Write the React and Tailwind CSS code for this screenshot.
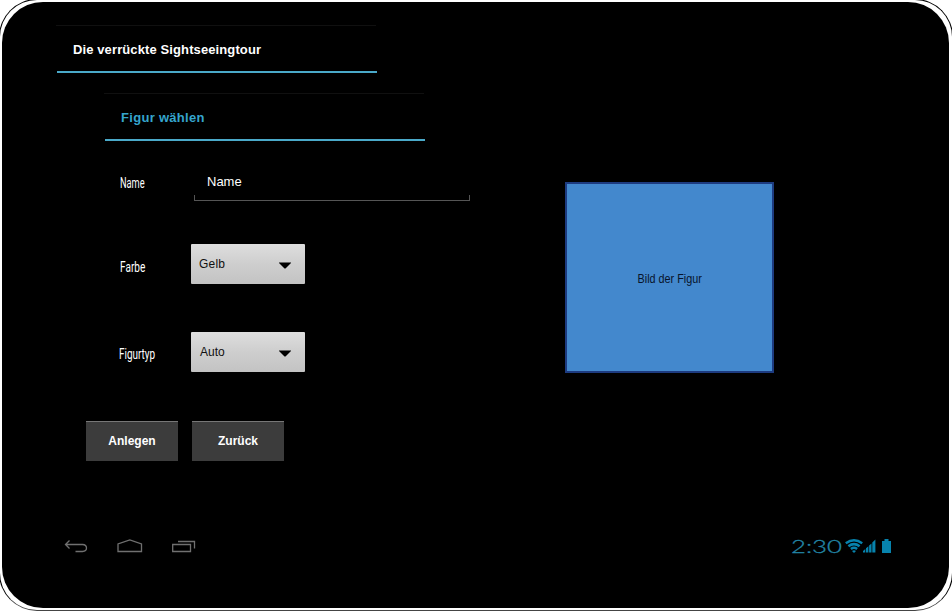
import React from "react";

function Heading({ children, className, textClass }) {
  return (
    <div className={`h-12 w-80 border-b-2 border-[#4aa9c9] ${className}`}>
      <div className="-ml-px h-px w-80 bg-[#101010]" />
      <h2 className={`pl-4 pt-[15px] text-[13px] font-bold leading-[18px] whitespace-nowrap ${textClass}`}>{children}</h2>
    </div>
  );
}

function Label({ children, className }) {
  return (
    <span className={`block w-9 origin-left whitespace-nowrap font-['Roboto',sans-serif] text-[14px] leading-4 text-white ${className}`}>
      {children}
    </span>
  );
}

function Select({ value, textClass }) {
  return (
    <div className="flex h-10 w-[114px] items-center justify-between rounded-[1px] bg-linear-to-b from-[#dedede] via-[#cecece] to-[#c3c3c3] pl-2 pr-[14px] text-[12px] text-[#111]">
      <span className={textClass}>{value}</span>
      <svg width="12" height="7" viewBox="0 0 12 7" className="mt-[3px]">
        <path d="M0 0.5H12V1L6.5 6.5H5.5L0 1Z" fill="#000" />
      </svg>
    </div>
  );
}

function Button({ children }) {
  return (
    <button className="h-10 w-[92px] border-t border-[#777] bg-[#3c3c3c] pb-[2px] text-[12px] font-bold text-white">{children}</button>
  );
}

function NavIcons() {
  return (
    <div className="flex h-4 items-center text-[#707070]">
      <svg width="24" height="14" viewBox="0 0 24 14" fill="none" stroke="currentColor" strokeWidth="1.3">
        <path d="M5.5 1.5L1.5 5.5L5.5 9.5M1.5 5.5H18.5Q22.5 5.7 22.5 9T18.5 12.5H11.5" />
      </svg>
      <svg width="26" height="14" viewBox="0 0 26 14" className="ml-[29px]" fill="none" stroke="currentColor" strokeWidth="1.3">
        <path d="M1 12.5V5L12.8 1L24.5 5V12.5Z" />
      </svg>
      <svg width="24" height="14" viewBox="0 0 24 14" className="ml-[29px]" fill="none" stroke="currentColor" strokeWidth="1.3">
        <path d="M0.7 5.5H18.5V12.5H0.7ZM6 2.5H22.5V9.5" />
      </svg>
    </div>
  );
}

function Status() {
  return (
    <div className="flex h-4 items-center text-[#0783ad]">
      <span className="block w-[54px] origin-left scale-x-[1.43] whitespace-nowrap font-['Lato',sans-serif] text-[18px] font-light leading-4 text-[#2387a8] [-webkit-text-stroke:0.3px_#2387a8]">2:30</span>
      <svg width="18" height="14" viewBox="0 0 18 14" fill="none" stroke="currentColor" strokeWidth="2.5">
        <path d="M0.8 4.2Q9 -1.6 17.2 4.2M3.4 7.2Q9 3 14.6 7.2M5.9 10Q9 7.6 12.1 10" />
        <path d="M7 11.9Q9 10.5 11 11.9L9 14Z" fill="currentColor" stroke="none" />
      </svg>
      <svg width="13" height="14" viewBox="0 0 13 14" fill="currentColor">
        <path d="M0 12L2.3 10V13.5H0ZM3 9.3L5.4 7.3V13.5H3ZM6.1 6.6L8.5 4.4V13.5H6.1ZM9.3 3.5L12.4 0.5V13.5H9.3Z" />
      </svg>
      <svg width="9" height="14" viewBox="0 0 9 14" className="ml-[6px]" fill="currentColor">
        <path d="M0 2H2.5V0H6.5V2H9V14H0Z" />
      </svg>
    </div>
  );
}

export default function App() {
  return (
    <div className="h-[611px] w-[952px] overflow-hidden bg-white font-['Liberation_Sans',Arial,sans-serif]">
      <div className="-ml-px -mt-px h-[612px] w-[954px] rounded-[38px] border border-black border-b-[#444] bg-white pl-[2px] pt-[2px]">
        <main className="flex h-[606px] w-[947px] flex-col rounded-[41px] bg-black pl-[55px] pt-[23px]">
          <Heading textClass="text-white tracking-[0.11px]">Die verrückte Sightseeingtour</Heading>
          <Heading className="ml-12 mt-5" textClass="text-[#35a5cd] tracking-[0.3px]">Figur wählen</Heading>
          <div className="flex h-[320px]">
            <form className="w-[508px]">
              <div className="flex">
                <Label className="ml-[63px] mt-[34px] scale-x-[0.66]">Name</Label>
                <div className="ml-[38px] mt-[32px] h-[28px] w-[276px]">
                  <div className="h-[22px] pl-[13px] text-[13px] leading-[18px] text-white">Name</div>
                  <div className="h-[6px] border-x border-b border-[#555]" />
                </div>
              </div>
              <div className="mt-[43px] flex">
                <Label className="ml-[63px] mt-[15px] scale-x-[0.72]">Farbe</Label>
                <div className="ml-[35px]"><Select value="Gelb" textClass="tracking-[0.2px]" /></div>
              </div>
              <div className="mt-12 flex">
                <Label className="ml-[62px] mt-[14px] scale-x-[0.71]">Figurtyp</Label>
                <div className="ml-[36px]"><Select value="Auto" textClass="pl-px" /></div>
              </div>
              <div className="ml-[29px] mt-[49px] flex gap-[14px]">
                <Button>Anlegen</Button>
                <Button>Zurück</Button>
              </div>
            </form>
            <div className="mt-[41px] flex h-[191px] w-[209px] items-center justify-center border-2 border-[#1d3b80] bg-[#4388cd] pt-[2px]">
              <span className="scale-x-90 whitespace-nowrap text-[12px] text-[#08142b]">Bild der Figur</span>
            </div>
          </div>
          <footer className="ml-[7px] mt-[77px] flex w-[827px] justify-between">
            <NavIcons />
            <Status />
          </footer>
        </main>
      </div>
    </div>
  );
}
